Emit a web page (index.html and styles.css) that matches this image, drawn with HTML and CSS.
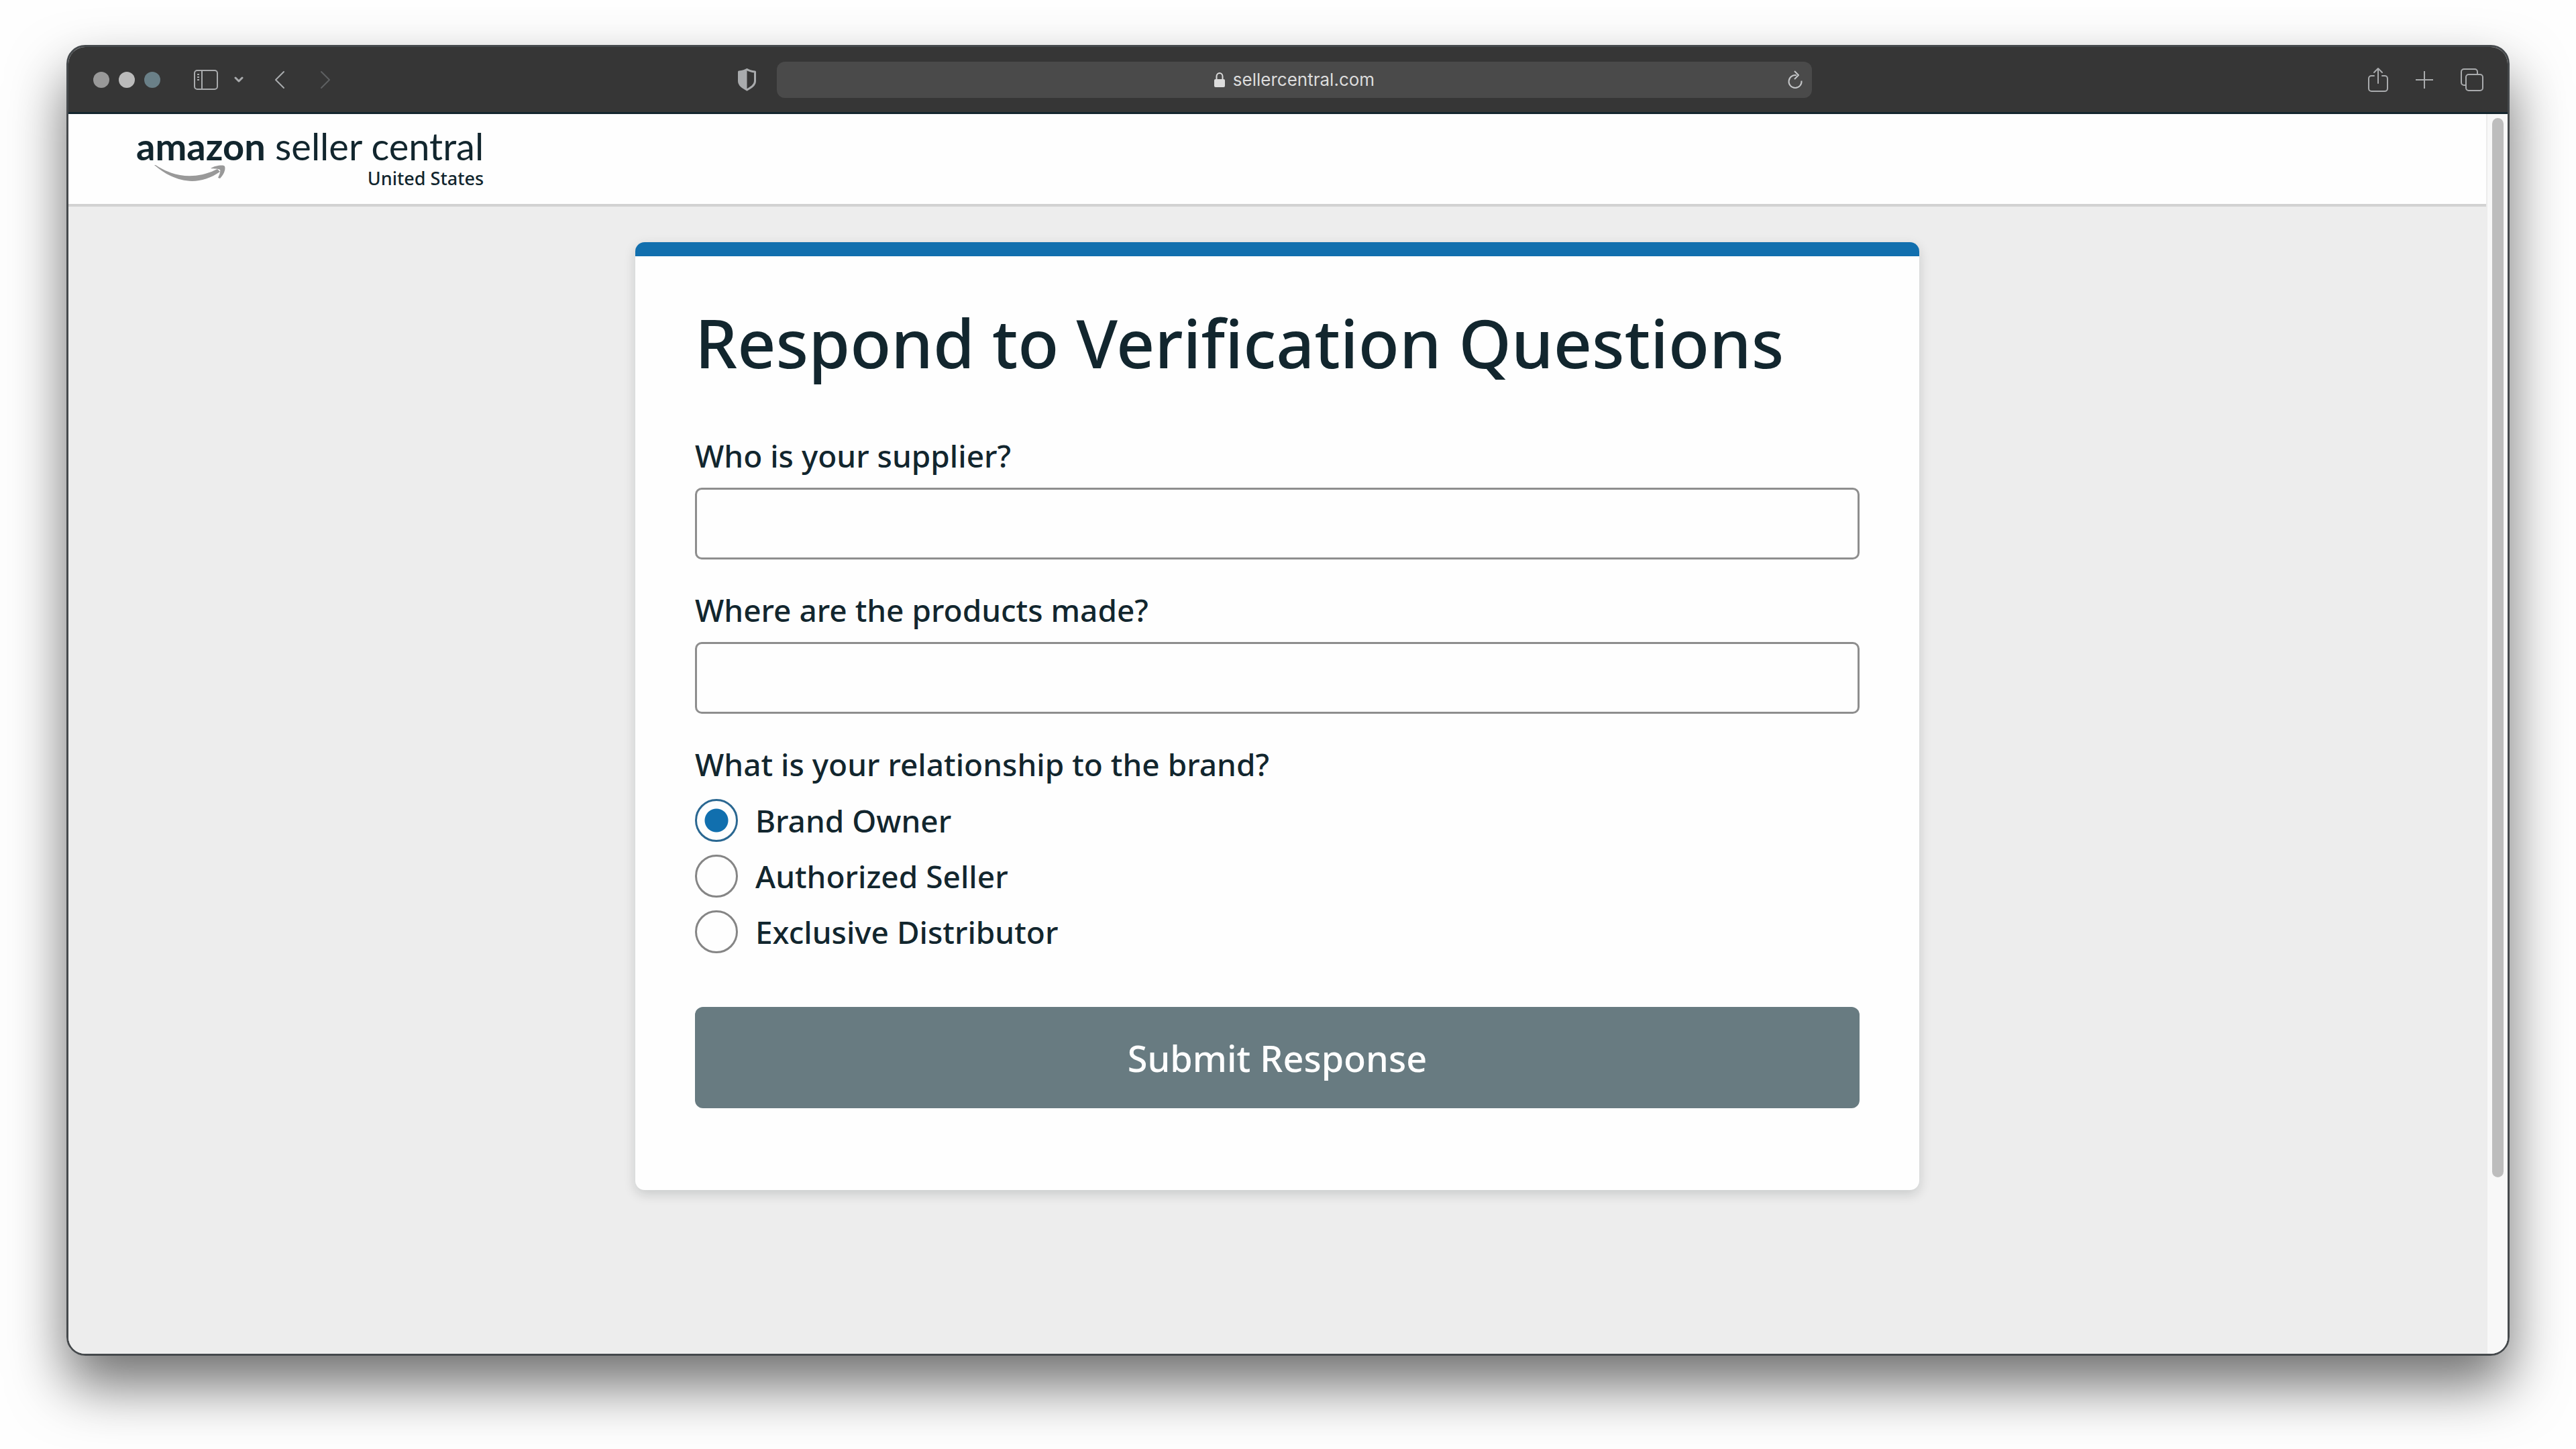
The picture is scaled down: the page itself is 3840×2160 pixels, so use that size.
FILE: index.html
```html
<!DOCTYPE html>
<html lang="en">
<head>
    <meta charset="UTF-8">
    <meta name="viewport" content="width=device-width, initial-scale=1.0">
    <title>Amazon Seller Central</title>
    <link rel="stylesheet" href="styles.css">
</head>

<body>
    <div class="window">
        <div class="toolbar">
            <div class="toolbar-left">
                <div class="lights">
                    <span class="light close"></span>
                    <span class="light minimize"></span>
                    <span class="light expand"></span>
                </div>
                <button class="icon-btn sidebar-btn" aria-label="Sidebar">
                    <svg width="36" height="32" viewBox="0 0 36 32" fill="none" stroke="currentColor" stroke-width="2">
                        <rect x="1" y="2" width="34" height="28" rx="4"/>
                        <path d="M12 2v28"/>
                        <path d="M5 8h3M5 12h3M5 16h3" stroke-width="2"/>
                    </svg>
                </button>
                <button class="icon-btn menu-btn" aria-label="Tab groups">
                    <svg width="14" height="10" viewBox="0 0 14 10" fill="none" stroke="currentColor" stroke-width="3" stroke-linecap="round" stroke-linejoin="round">
                        <path d="M2 2l5 5 5-5"/>
                    </svg>
                </button>
                <button class="icon-btn back-btn" aria-label="Back">
                    <svg width="16" height="28" viewBox="0 0 16 28" fill="none" stroke="currentColor" stroke-width="2" stroke-linecap="round" stroke-linejoin="round">
                        <path d="M14 2L2 14l12 12"/>
                    </svg>
                </button>
                <button class="icon-btn forward-btn" aria-label="Forward">
                    <svg width="16" height="28" viewBox="0 0 16 28" fill="none" stroke="currentColor" stroke-width="2" stroke-linecap="round" stroke-linejoin="round">
                        <path d="M2 2l12 12L2 26"/>
                    </svg>
                </button>
            </div>

            <div class="address">
                <button class="icon-btn shield-btn" aria-label="Privacy report">
                    <svg width="27" height="34" viewBox="0 0 27 34">
                        <path d="M13.500 1.500C10 4 6 4.500 1.500 5v14c0 6 6 9.500 12 13 6-3.500 12-7 12-13V5C21 4.500 17 4 13.500 1.500z" fill="none" stroke="currentColor" stroke-width="3" stroke-linejoin="round"/>
                        <path d="M13.500 1.500C10 4 6 4.500 1.500 5v14c0 6 6 9.500 12 13z" fill="currentColor"/>
                    </svg>
                </button>
                <div class="url-bar">
                    <div class="url">
                        <svg width="16" height="24" viewBox="0 0 16 24">
                            <path d="M3.500 12V7a4.500 5 0 0 1 9 0v5" fill="none" stroke="currentColor" stroke-width="2"/>
                            <rect x="0" y="11" width="16" height="12" rx="2" fill="currentColor"/>
                        </svg>
                        <span>sellercentral.com</span>
                    </div>
                    <button class="icon-btn" aria-label="Reload">
                        <svg width="22" height="28" viewBox="0 0 22 28" fill="none" stroke="currentColor" stroke-width="2">
                            <path d="M20.500 15.500A9.500 9.500 0 1 1 13 7.200"/>
                            <path d="M10 1l6 6-6 6" stroke-linejoin="round"/>
                        </svg>
                    </button>
                </div>
            </div>

            <div class="toolbar-right">
                <button class="icon-btn" aria-label="Share">
                    <svg width="30" height="38" viewBox="0 0 30 38" fill="none" stroke="currentColor" stroke-width="2" stroke-linecap="round" stroke-linejoin="round">
                        <path d="M9 13H5a4 4 0 0 0-4 4v15a4 4 0 0 0 4 4h20a4 4 0 0 0 4-4V17a4 4 0 0 0-4-4h-4"/>
                        <path d="M15 24V2M9 8l6-6 6 6"/>
                    </svg>
                </button>
                <button class="icon-btn" aria-label="New tab">
                    <svg width="26" height="26" viewBox="0 0 26 26" fill="none" stroke="currentColor" stroke-width="2">
                        <path d="M13 0v26M0 13h26"/>
                    </svg>
                </button>
                <button class="icon-btn" aria-label="Tab overview">
                    <svg width="34" height="34" viewBox="0 0 34 34" fill="none" stroke="currentColor" stroke-width="2">
                        <rect x="8" y="9" width="25" height="24" rx="4"/>
                        <path d="M8 25H5a4 4 0 0 1-4-4V5a4 4 0 0 1 4-4h16a4 4 0 0 1 4 4v4"/>
                    </svg>
                </button>
            </div>
        </div>

        <div class="viewport">
            <div class="page">
                <header class="site-header">
                    <a class="logo" href="#">
                        <span class="logo-name"><b>amazon</b> seller central</span>
                        <span class="logo-bottom">
                            <svg width="106" height="26" viewBox="0 0 106 26">
                                <path d="M0 0C30 26 65 33 98 10l-4-4C64 21 32 20 2 0z" fill="#999"/>
                                <path d="M84 5C90 1 103-1 105 2c2 6-3 14-7 18l-3-1c2-4 4-9 3-12-3-2-8-1-14-2z" fill="#999"/>
                            </svg>
                            <span class="logo-country">United States</span>
                        </span>
                    </a>
                </header>

                <main>
                    <form class="card">
                        <h1>Respond to Verification Questions</h1>

                        <div class="field">
                            <label for="supplier">Who is your supplier?</label>
                            <input id="supplier" type="text">
                        </div>

                        <div class="field">
                            <label for="origin">Where are the products made?</label>
                            <input id="origin" type="text">
                        </div>

                        <fieldset>
                            <legend>What is your relationship to the brand?</legend>
                            <label class="option"><input type="radio" name="relationship" value="owner" checked> Brand Owner</label>
                            <label class="option"><input type="radio" name="relationship" value="seller"> Authorized Seller</label>
                            <label class="option"><input type="radio" name="relationship" value="distributor"> Exclusive Distributor</label>
                        </fieldset>

                        <button class="submit-btn" type="button">Submit Response</button>
                    </form>
                </main>
            </div>

            <div class="scroll-track">
                <div class="scroll-thumb"></div>
            </div>
        </div>
    </div>
</body>
</html>
```
FILE: styles.css
```css
* {
    box-sizing: border-box;
}

body {
    font-family: 'Noto Sans', 'Open Sans', sans-serif;
    background-color: #fefefe;
    color: #12262e;
    margin: 0;
    padding: 67px 99px 139px;
    min-height: 100vh;
    display: flex;
}

/* Browser window */
.window {
    flex: 1;
    display: flex;
    flex-direction: column;
    border: 3px solid #45494c;
    border-radius: 28px;
    overflow: hidden;
    box-shadow: 0 44px 84px rgba(0, 0, 0, 0.56);
}

.toolbar {
    display: grid;
    grid-template-columns: 24fr 40fr 25fr;
    align-items: center;
    height: 100px;
    padding: 0 36px 0 37px;
    background-color: #363636;
    border-bottom: 3px solid #14262e;
}

.toolbar-left,
.toolbar-right,
.address,
.url,
.lights {
    display: flex;
    align-items: center;
}

.lights {
    gap: 14px;
}

.light {
    width: 24px;
    height: 24px;
    border-radius: 50%;
}

.close {
    background-color: #999;
}

.minimize {
    background-color: #bbb;
}

.expand {
    background-color: #6a8088;
}

.icon-btn {
    display: flex;
    padding: 0;
    border: none;
    background: none;
    color: #a9abad;
    cursor: pointer;
}

.sidebar-btn {
    margin-left: 50px;
}

.menu-btn {
    margin-left: 24px;
}

.back-btn {
    margin-left: 46px;
}

.forward-btn {
    margin-left: 52px;
    color: #5e6062;
}

.address {
    gap: 31px;
}

.url-bar {
    flex: 1;
    display: grid;
    grid-template-columns: 1fr auto 1fr;
    align-items: center;
    height: 54px;
    padding: 0 14px;
    border-radius: 12px;
    background-color: #4a4a4a;
}

.url {
    grid-column: 2;
    gap: 12px;
    color: #dcdcdc;
    font-family: Inter, sans-serif;
    font-size: 26px;
}

.url-bar .icon-btn {
    justify-self: end;
    color: #c4c6c8;
}

.toolbar-right {
    justify-content: flex-end;
    gap: 41px;
}

.viewport {
    flex: 1;
    display: flex;
}

.page {
    flex: 1;
    display: flex;
    flex-direction: column;
    background-color: #ededed;
}

.scroll-track {
    width: 32px;
    padding: 6px 6px 6px 7px;
    border-left: 2px solid #ececec;
    background-color: #f8f8f8;
}

.scroll-thumb {
    height: 86%;
    border-radius: 9px;
    background-color: #bdbdbd;
}

/* Page header */
.site-header {
    display: flex;
    height: 138px;
    padding: 20px 101px 0;
    background-color: #fefefe;
    border-bottom: 4px solid #d2d2d2;
}

.logo {
    display: flex;
    flex-direction: column;
    color: #12262e;
    text-decoration: none;
}

.logo-name {
    font-family: Lato, 'Noto Sans', sans-serif;
    font-size: 56px;
    line-height: 56px;
}

.logo-bottom {
    display: flex;
    justify-content: space-between;
    padding-left: 27px;
}

.logo-country {
    font-size: 27px;
    font-weight: 500;
    line-height: 40px;
}

/* Form card */
main {
    display: flex;
    justify-content: center;
    padding: 53px 0;
}

.card {
    width: 100%;
    max-width: 1914px;
    padding: 68px 89px 122px;
    border-top: 21px solid #116fae;
    border-radius: 14px;
    background-color: #fefefe;
    box-shadow: 0 6px 18px rgba(0, 20, 20, 0.16);
}

h1 {
    margin: 0 0 81px;
    font-size: 100px;
    font-weight: 500;
    line-height: 120px;
}

.field {
    margin-bottom: 47px;
}

.field label,
legend {
    display: block;
    padding: 0;
    font-size: 46px;
    font-weight: 500;
    line-height: 56px;
}

input[type="text"] {
    display: block;
    width: 100%;
    height: 107px;
    margin-top: 20px;
    padding: 0 24px;
    border: 3px solid #8e8e8e;
    border-radius: 10px;
    background-color: #fefefe;
    color: #12262e;
    font: inherit;
    font-size: 46px;
}

fieldset {
    margin: 0 0 80px;
    padding: 0;
    border: none;
}

legend {
    margin-bottom: 24px;
}

.option {
    display: flex;
    align-items: center;
    gap: 26px;
    font-size: 46px;
    font-weight: 500;
    line-height: 62px;
}

.option + .option {
    margin-top: 19px;
}

input[type="radio"] {
    appearance: none;
    width: 64px;
    height: 64px;
    margin: 0;
    border: 3px solid #858585;
    border-radius: 50%;
}

input[type="radio"]:checked {
    border-color: #2a6791;
    background: radial-gradient(circle, #116fae 17px, transparent 18px);
}

.submit-btn {
    width: 100%;
    height: 151px;
    border: none;
    border-radius: 12px;
    background-color: #687b81;
    color: #fefefe;
    font: inherit;
    font-size: 54px;
    font-weight: 500;
    cursor: pointer;
}
```
